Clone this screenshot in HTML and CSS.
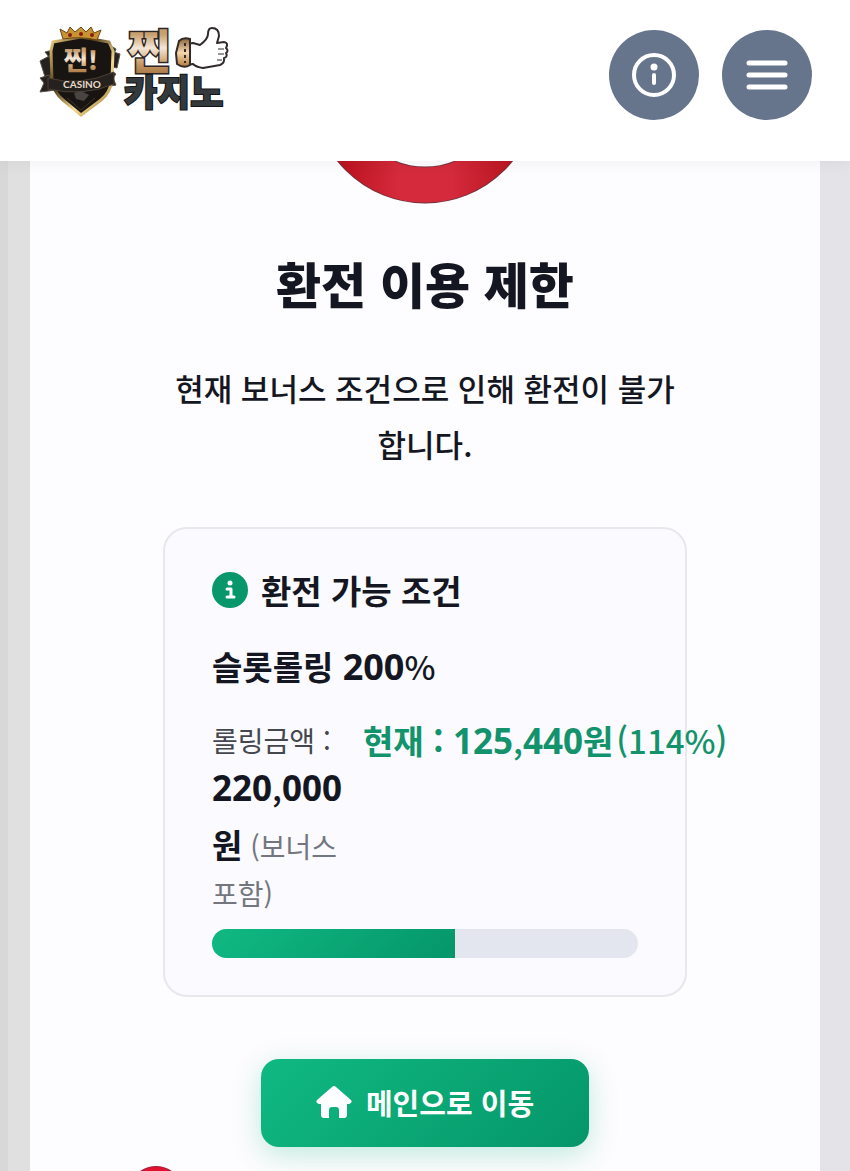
FILE: index.html
```html
<!DOCTYPE html>
<html lang="ko">
<head>
<meta charset="utf-8">
<meta name="viewport" content="width=device-width, initial-scale=1">
<title>환전 이용 제한</title>
<link rel="stylesheet" href="styles.css">
</head>
<body>
<header class="topbar">
  <a class="logo" href="#" aria-label="찐카지노">
    <svg class="logo-art" viewBox="0 0 192 92" width="192" height="92">
      <defs>
        <linearGradient id="gold" x1="0" y1="0" x2="0" y2="1">
          <stop offset="0" stop-color="#b98c58"/><stop offset=".3" stop-color="#c9a273"/><stop offset=".5" stop-color="#f4e7d8"/><stop offset=".75" stop-color="#c59660"/><stop offset="1" stop-color="#936436"/>
        </linearGradient>
        <linearGradient id="rim" x1="0" y1="0" x2="1" y2="1">
          <stop offset="0" stop-color="#f3d485"/><stop offset=".35" stop-color="#4b3513"/><stop offset=".65" stop-color="#f5dc91"/><stop offset="1" stop-color="#8f6b24"/>
        </linearGradient>
        <linearGradient id="cuff" x1="0" y1="0" x2="0" y2="1">
          <stop offset="0" stop-color="#8a6335"/><stop offset=".5" stop-color="#f6d7ad"/><stop offset="1" stop-color="#b27a3b"/>
        </linearGradient>
      </defs>
      <g fill="#24211f" stroke="#5b5148">
        <path d="M2 35l11-6 7 18-12 7zM7 26l12-3v18zM67 27l4-8 7 4-5 12zM69 24l13 4-3 14-10-2z"/>
        <path d="M11 49l-9 3 4 5-4 9 16-2zM72 45l6 3-3 4 3 7-10 2z"/>
      </g>
      <path d="M15 16l28-5 28 5 4 9-1 29q-2 13-11 20l-20 15-18-15q-9-7-11-20l-1-29z" fill="#171412" stroke="url(#rim)" stroke-width="3"/>
      <path d="M25 13l-3-10 7 4 3-6 5 5 6-5 5 5 5-5 3 6 7-3-4 10q-17-4-34-1z" fill="#c79434" stroke="#704410"/>
      <g fill="#8d1b15"><circle cx="32" cy="9" r="2"/><circle cx="43" cy="8" r="2"/><circle cx="54" cy="9" r="2"/></g>
      <text class="shield-word" x="43" y="44" text-anchor="middle" fill="url(#gold)">찐!</text>
      <path d="M10 52q31 9 66-6v12q-31 13-66 5z" fill="#24211f" stroke="#4c4135"/>
      <text class="shield-label" x="44" y="62" text-anchor="middle">CASINO</text>
      <path d="M36 67l7-2 8 4-5 6-8-2z" fill="#494442"/><path d="M29 72l14 12 14-12" fill="none" stroke="#433626"/>
      <text class="word-top" x="90" y="42" fill="url(#gold)">찐</text>
      <path d="M149 18l6-1 7 2q8-6 8-11 0-6 4-6 7 0 7 8l-2 7 7-1q5 1 2 6 3 3 0 5 2 4-2 5 1 5-4 7l-17 3q-7-1-10-4l-6 1z" fill="#fff" stroke="#302b2a" stroke-width="2" stroke-linejoin="round"/>
      <path d="M180 23h6m-6 5h6m-7 6h5" stroke="#302b2a" stroke-width="1"/>
      <path d="M141 15q4-4 11-2v26q-6 4-13-1l-1-11z" fill="url(#cuff)" stroke="#302b2a" stroke-width="2"/>
      <path d="M147 17v20" stroke="#302b2a" stroke-width="2" stroke-dasharray="3 3"/>
      <text class="word-bottom" x="86" y="80">카지노</text>
    </svg>
  </a>
  <nav class="actions">
    <button class="round" type="button" aria-label="정보">
      <svg viewBox="0 0 44 44" width="44" height="44" fill="none" stroke="#fff" stroke-width="4" stroke-linecap="round"><circle cx="22" cy="22" r="20"/><path d="M22 22v8"/><circle cx="22" cy="14" r="3.5" fill="#fff" stroke="none"/></svg>
    </button>
    <button class="round" type="button" aria-label="메뉴">
      <svg viewBox="0 0 44 44" width="44" height="44" stroke="#fff" stroke-width="5" stroke-linecap="round"><path d="M4 10h36M4 22h36M4 34h36"/></svg>
    </button>
  </nav>
</header>
<main class="backdrop">
  <section class="sheet">
    <svg class="ring" viewBox="0 0 178 43" width="178" height="43">
      <defs><linearGradient id="red" gradientUnits="userSpaceOnUse" x1="0" y1="0" x2="178" y2="0"><stop offset="0" stop-color="#b9101c"/><stop offset=".35" stop-color="#d42a3c"/><stop offset=".65" stop-color="#d42a3c"/><stop offset="1" stop-color="#b9141f"/></linearGradient></defs>
      <circle cx="89" cy="-70" r="94" fill="none" stroke="#75313c" stroke-width="37"/>
      <circle cx="89" cy="-70" r="94" fill="none" stroke="url(#red)" stroke-width="35"/>
    </svg>
    <div class="content">
      <h1 class="title">환전 이용 제한</h1>
      <p class="message">현재 보너스 조건으로 인해 환전이 불가합니다.</p>
      <article class="panel">
        <h2 class="panel-title">
          <svg viewBox="0 0 36 36" width="36" height="36"><circle cx="18" cy="18" r="18" fill="#08976a"/><circle cx="18" cy="11" r="2.5" fill="#fff"/><path d="M15 17h4v8m-4 0h7" fill="none" stroke="#fff" stroke-width="3" stroke-linecap="round" stroke-linejoin="round"/></svg>
          환전 가능 조건
        </h2>
        <h3 class="rule">슬롯롤링 <span class="num">200</span><span class="mark">%</span></h3>
        <div class="amounts">
          <div class="target">
            <p class="line">롤링금액 :</p>
            <p class="line strong"><span class="num">220</span><span class="mark">,</span><span class="num">000</span></p>
            <p class="line second"><span class="strong">원</span><span class="note"> (보너스</span></p>
            <p class="line note">포함)</p>
          </div>
          <p class="current">현재 : <span class="num">125</span><span class="mark">,</span><span class="num">440</span>원<span class="mark percent">(114%)</span></p>
        </div>
        <div class="track" role="progressbar" aria-label="롤링 진행률" aria-valuenow="57" aria-valuemin="0" aria-valuemax="100"><div class="fill" style="width:57%"></div></div>
      </article>
      <button class="home" type="button">
        <svg viewBox="0 0 36 32" width="36" height="32" fill="#fff"><path d="M16 1q2-2 4 0l15 13q2 3-2 4h-2v11q0 3-3 3h-5v-8q0-3-3-3h-4q-3 0-3 3v8H8q-3 0-3-3V18H3q-4-1-2-4z"/></svg>
        메인으로 이동
      </button>
    </div>
    <div class="badge"></div>
  </section>
</main>
</body>
</html>
```
FILE: styles.css
```css
* { box-sizing: border-box; }
body {
  margin: 0;
  height: 100vh;
  display: flex;
  flex-direction: column;
  overflow: hidden;
  color: #141722;
  font-family: "Noto Sans CJK KR", "Noto Sans", sans-serif;
}
h1, h2, h3, p { margin: 0; }
button { border: 0; padding: 0; font: inherit; cursor: pointer; }
svg { display: block; flex: none; }

.topbar {
  flex: none;
  display: flex;
  align-items: flex-start;
  justify-content: space-between;
  height: 161px;
  padding: 30px 38px;
  background: #fff;
  box-shadow: 0 2px 16px rgba(0, 0, 0, .05);
  z-index: 1;
}
.logo-art { overflow: visible; margin-top: -4px; }
.shield-word { font-size: 26px; font-weight: 900; }
.shield-label { font: 700 10px Lato, sans-serif; fill: #e7dccb; }
.word-top { font-size: 46px; font-weight: 900; stroke: #2b2623; stroke-width: 3px; paint-order: stroke; }
.word-bottom { font-size: 36px; font-weight: 900; fill: #34393c; stroke: #101314; stroke-width: 2px; paint-order: stroke; }

.actions { display: flex; gap: 23px; }
.round {
  display: grid;
  place-items: center;
  width: 90px;
  height: 90px;
  border-radius: 50%;
  background: #66758c;
}

.backdrop {
  flex: 1;
  min-height: 0;
  overflow: hidden;
  padding: 0 30px;
  background: linear-gradient(90deg, #d8d8d8 8px, #e0e0e0 8px, #e0e0e0 50%, #e4e3e8 50%);
}
.sheet { background: #fdfcfe; min-height: 100%; }
.ring { margin: 0 auto; }
.content {
  display: flex;
  flex-direction: column;
  align-items: center;
  max-width: 524px;
  margin: 0 auto;
  padding-top: 43px;
}
.title { font-size: 49px; line-height: 72px; font-weight: 900; }
.message {
  margin-top: 41px;
  font-size: 31px;
  line-height: 56px;
  font-weight: 500;
  text-align: center;
}
.panel {
  width: 100%;
  margin-top: 55px;
  padding: 36px 47px 37px;
  border: 2px solid #e7e7ec;
  border-radius: 24px;
  background: #fafaff;
}
.panel-title {
  display: flex;
  align-items: center;
  gap: 13px;
  font-size: 33px;
  line-height: 50px;
  font-weight: 700;
}
.rule { margin-top: 26px; font-size: 33px; line-height: 50px; font-weight: 700; }
.num { font-family: "Noto Sans", sans-serif; font-size: 36px; font-weight: 700; line-height: 1; }
.mark { font-size: 33px; font-weight: 500; line-height: 1; }
.amounts { display: flex; gap: 18px; margin-top: 26px; white-space: nowrap; }
.amounts .num { font-size: 35px; }
.target { flex: none; width: 133px; font-size: 28px; color: #45474f; }
.line { line-height: 47px; }
.second { margin-top: 10px; }
.strong { color: #141722; font-size: 33px; font-weight: 700; }
.note { color: #74767e; font-size: 28px; font-weight: 400; }
.current { font-size: 33px; line-height: 46px; font-weight: 700; color: #12936c; }
.percent { margin-left: 3px; }
.track {
  height: 29px;
  margin-top: 12px;
  border-radius: 15px;
  overflow: hidden;
  background: #e4e6ef;
}
.fill { height: 100%; background: linear-gradient(135deg, #10b981, #059669); }
.home {
  display: flex;
  align-items: center;
  justify-content: center;
  gap: 14px;
  width: 328px;
  height: 88px;
  margin-top: 62px;
  padding-bottom: 3px;
  border-radius: 18px;
  color: #fff;
  font-size: 29px;
  font-weight: 700;
  background: linear-gradient(135deg, #10b981, #059669);
  box-shadow: 0 8px 28px rgba(16, 185, 129, .25);
}
.badge {
  width: 56px;
  height: 56px;
  margin: 19px 98px;
  border: 1px solid #a51a3b;
  border-radius: 50%;
  background: #e2122f;
}
```
